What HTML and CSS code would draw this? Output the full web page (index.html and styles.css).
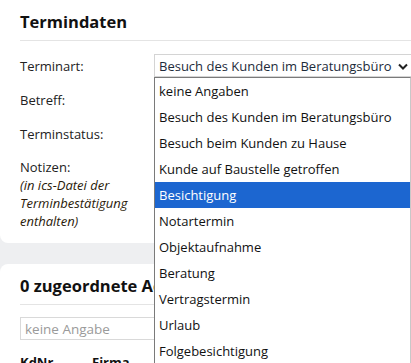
FILE: index.html
```html
<!DOCTYPE html>
<html lang="de">

<head>
    <meta charset="UTF-8" />
    <title>Termindaten</title>
    <link rel="stylesheet" href="styles.css">
</head>

<body>
    <div class="card">
        <h2>Termindaten</h2>

        <div class="form">
            <label>Terminart:</label>
            <div class="select-wrap">
                <div class="select">
                    <span>Besuch des Kunden im Beratungsbüro</span>
                    <svg class="chevron" width="10" height="7" viewBox="0 0 10 7">
                        <path d="M1 1.5 L5 5.5 L9 1.5" fill="none" stroke="#222" stroke-width="2" />
                    </svg>
                </div>
                <ul class="options">
                    <li>keine Angaben</li>
                    <li>Besuch des Kunden im Beratungsbüro</li>
                    <li>Besuch beim Kunden zu Hause</li>
                    <li>Kunde auf Baustelle getroffen</li>
                    <li class="selected">Besichtigung</li>
                    <li>Notartermin</li>
                    <li>Objektaufnahme</li>
                    <li>Beratung</li>
                    <li>Vertragstermin</li>
                    <li>Urlaub</li>
                    <li>Folgebesichtigung</li>
                </ul>
            </div>

            <label>Betreff:</label>
            <div class="field"></div>

            <label>Terminstatus:</label>
            <div class="field"></div>

            <label class="top">Notizen:<br><em>(in ics-Datei der Terminbestätigung enthalten)</em></label>
            <div class="field"></div>
        </div>
    </div>

    <div class="card second">
        <h2>0 zugeordnete Adressen</h2>
        <input type="text" class="search" placeholder="keine Angabe" />
        <div class="thead">
            <span class="kdnr">KdNr.</span>
            <span>Firma</span>
        </div>
    </div>
</body>

</html>
```

FILE: styles.css
```css
body {
    margin: 0;
    background: #eeeff1;
    font-family: "Open Sans", Arial, sans-serif;
    font-size: 13px;
    color: #222;
    overflow: hidden;
}

.card {
    background: #fff;
    border-radius: 0 0 8px 8px;
    padding: 10px 0 13px 20px;
}

.card.second {
    margin-top: 21px;
    border-radius: 8px 8px 0 0;
    padding-top: 10px;
    height: 200px;
}

h2 {
    margin: 0;
    font-size: 16.5px;
    line-height: 24px;
    color: #111;
    padding-bottom: 6px;
    border-bottom: 1px solid #e4e4e4;
}

.form {
    display: grid;
    grid-template-columns: 134px 1fr;
    row-gap: 11px;
    margin-top: 13px;
}

.form label {
    line-height: 18px;
    align-self: center;
}

.form label.top {
    align-self: start;
    padding-top: 2px;
}

.form em {
    color: #2a1a0a;
}

.field {
    height: 23px;
}

.select-wrap {
    position: relative;
}

.select {
    height: 23px;
    box-sizing: border-box;
    border: 1px solid #d4d4d4;
    border-right: none;
    display: flex;
    align-items: center;
    justify-content: space-between;
    padding: 0 3px 0 4px;
    color: #1d2b3a;
}

.chevron {
    margin-top: 1px;
}

.options {
    position: absolute;
    top: 23px;
    left: 0;
    width: 257px;
    margin: 0;
    padding: 0;
    list-style: none;
    background: #fff;
    border: 1px solid #7a7a7a;
    border-right-color: #c8c8c8;
    box-sizing: border-box;
}

.options li {
    height: 26px;
    line-height: 26px;
    padding-left: 4px;
    color: #111;
}

.options li.selected {
    background: #1c66d0;
    color: #fff;
}

.search {
    display: block;
    margin-top: 12px;
    width: 200px;
    height: 23px;
    box-sizing: border-box;
    border: 1px solid #d9d9d9;
    padding: 0 4px;
    font-family: inherit;
    font-size: 13.5px;
}

.search::placeholder {
    color: #9a9a9a;
}

.thead {
    display: flex;
    margin-top: 13px;
    font-weight: bold;
    color: #111;
}

.kdnr {
    width: 72px;
}
```
